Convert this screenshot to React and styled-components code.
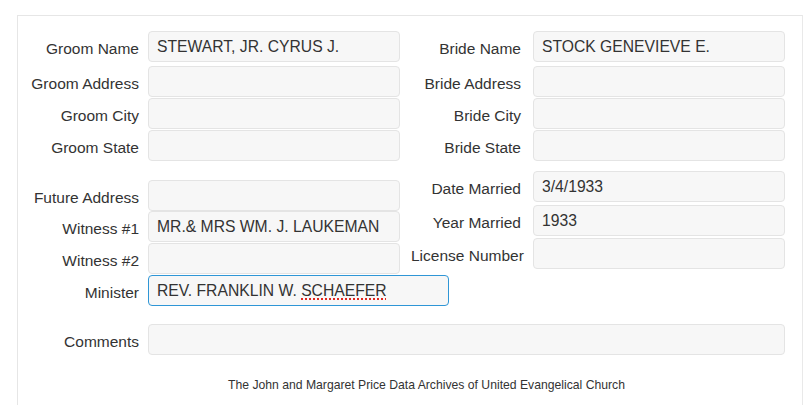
import React from 'react';
import styled, { createGlobalStyle } from 'styled-components';

const GlobalStyle = createGlobalStyle`
    html, body {
        margin: 0;
        padding: 0;
        background: #fff;
    }
    body {
        font-family: 'Liberation Sans', Arial, sans-serif;
        color: #333;
    }
`;

const Page = styled.div`
    width: 805px;
    height: 405px;
    overflow: hidden;
    padding: 15px 0 0 17px;
    box-sizing: border-box;
`;

const Panel = styled.div`
    width: 786px;
    height: 420px;
    box-sizing: border-box;
    border: 1px solid #e6e6e6;
    border-right-color: #e9e9e9;
    background: #fff;
    padding: 15px 0 0 11px;
`;

const Columns = styled.div`
    display: flex;
    gap: 11px;
`;

const Column = styled.div`
    display: flex;
    flex-direction: column;
    width: ${(p) => p.$width}px;
    flex: none;
`;

const Row = styled.div`
    display: grid;
    grid-template-columns: 110px ${(p) => p.$labelGap || 9}px ${(p) => p.$width || 252}px;
    margin-top: ${(p) => p.$top || 0}px;
    height: 31px;
`;

const Label = styled.label`
    grid-column: 1;
    font-size: 15.5px;
    line-height: 22px;
    padding-top: 7px;
    text-align: right;
    white-space: nowrap;
    color: #333;
`;

const Field = styled.div`
    grid-column: 3;
    height: 31px;
    box-sizing: border-box;
    border: 1px solid ${(p) => (p.$focused ? '#2f96d6' : '#e4e4e4')};
    border-radius: 4px;
    background: #f7f7f7;
    padding: 0 8px;
    font-size: 15.7px;
    line-height: 29px;
    color: #333;
    white-space: nowrap;
    overflow: hidden;
`;

const Misspelled = styled.span`
    text-decoration: underline dotted #e0261f;
    text-decoration-thickness: 2px;
    text-underline-offset: 2px;
`;

const Footer = styled.div`
    margin-top: 23px;
    padding-left: 22px;
    text-align: center;
    font-size: 12.2px;
    color: #333;
`;

const left = [
    { label: 'Groom Name', value: 'STEWART, JR. CYRUS J.' },
    { label: 'Groom Address', top: 4 },
    { label: 'Groom City', top: 1 },
    { label: 'Groom State', top: 1 },
    { label: 'Future Address', top: 19 },
    { label: 'Witness #1', value: 'MR.& MRS WM. J. LAUKEMAN' },
    { label: 'Witness #2', top: 1 },
];

const right = [
    { label: 'Bride Name', value: 'STOCK GENEVIEVE E.' },
    { label: 'Bride Address', top: 4 },
    { label: 'Bride City', top: 1 },
    { label: 'Bride State', top: 1 },
    { label: 'Date Married', value: '3/4/1933', top: 10 },
    { label: 'Year Married', value: '1933', top: 3 },
    { label: 'License Number', top: 2 },
];

const App = () => (
    <>
        <GlobalStyle />
        <Page>
            <Panel>
                <Columns>
                    <Column $width={371}>
                        {left.map((f) => (
                            <Row key={f.label} $top={f.top}>
                                <Label>{f.label}</Label>
                                <Field>{f.value}</Field>
                            </Row>
                        ))}
                        <Row $top={1} $width={301}>
                            <Label>Minister</Label>
                            <Field $focused>
                                REV. FRANKLIN W. <Misspelled>SCHAEFER</Misspelled>
                            </Field>
                        </Row>
                    </Column>
                    <Column $width={374}>
                        {right.map((f) => (
                            <Row key={f.label} $top={f.top} $labelGap={12}>
                                <Label>{f.label}</Label>
                                <Field>{f.value}</Field>
                            </Row>
                        ))}
                    </Column>
                </Columns>
                <Row $top={18} $width={637}>
                    <Label>Comments</Label>
                    <Field />
                </Row>
                <Footer>The John and Margaret Price Data Archives of United Evangelical Church</Footer>
            </Panel>
        </Page>
    </>
);

export default App;
